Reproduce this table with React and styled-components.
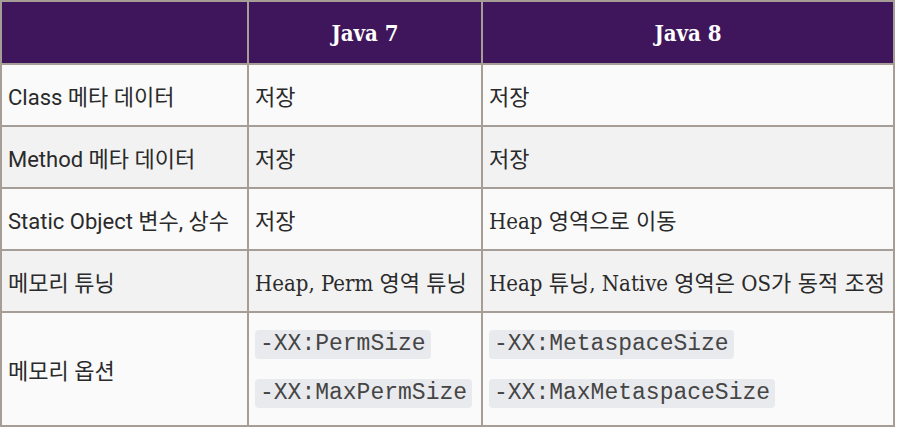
import React from 'react';
import styled, { createGlobalStyle } from 'styled-components';

const GlobalStyle = createGlobalStyle`
    html, body {
        margin: 0;
        padding: 0;
        background: #ffffff;
    }
`;

const Table = styled.table`
    width: 895px;
    border-collapse: collapse;
    border: 2px solid #a69d97;
    table-layout: fixed;
    font-family: Roboto, "Noto Sans CJK KR", sans-serif;
    color: #2a2a2a;
`;

const HeadCell = styled.th`
    height: 61px;
    padding: 0 6px;
    background-color: #3f165b;
    color: #ffffff;
    font-family: "DejaVu Serif Condensed", "DejaVu Serif", "Noto Sans CJK KR", serif;
    font-size: 22px;
    font-weight: bold;
    text-align: center;
    border: 2px solid #a69d97;
`;

const Row = styled.tr`
    background-color: ${(p) => (p.$alt ? '#f2f2f2' : '#fafafa')};
`;

const Cell = styled.td`
    height: ${(p) => (p.$tall ? '112px' : '60px')};
    padding: 0 6px;
    border: 2px solid #a69d97;
    font-size: 22px;
    vertical-align: middle;
    font-family: ${(p) =>
        p.$serif
            ? '"DejaVu Serif Condensed", "DejaVu Serif", "Noto Sans CJK KR", serif'
            : 'Roboto, "Noto Sans CJK KR", sans-serif'};
    white-space: nowrap;
`;

const CodeStack = styled.div`
    display: flex;
    flex-direction: column;
    align-items: flex-start;
    gap: 20px;
`;

const Code = styled.code`
    display: inline-block;
    padding: 3px 5px;
    background-color: #e9eaed;
    border-radius: 4px;
    font-family: "Liberation Mono", "Courier New", monospace;
    font-size: 23px;
    line-height: 23px;
    color: #454545;
`;

const rows = [
    ['Class 메타 데이터', '저장', '저장'],
    ['Method 메타 데이터', '저장', '저장'],
    ['Static Object 변수, 상수', '저장', 'Heap 영역으로 이동'],
    ['메모리 튜닝', 'Heap, Perm 영역 튜닝', 'Heap 튜닝, Native 영역은 OS가 동적 조정'],
];

export default function App() {
    return (
        <>
            <GlobalStyle />
            <Table>
                <colgroup>
                    <col style={{ width: 247 }} />
                    <col style={{ width: 234 }} />
                    <col />
                </colgroup>
                <thead>
                    <tr>
                        <HeadCell />
                        <HeadCell>Java 7</HeadCell>
                        <HeadCell>Java 8</HeadCell>
                    </tr>
                </thead>
                <tbody>
                    {rows.map((r, i) => (
                        <Row key={r[0]} $alt={i % 2 === 1}>
                            <Cell>{r[0]}</Cell>
                            <Cell $serif>{r[1]}</Cell>
                            <Cell $serif>{r[2]}</Cell>
                        </Row>
                    ))}
                    <Row>
                        <Cell $tall>메모리 옵션</Cell>
                        <Cell $tall>
                            <CodeStack>
                                <Code>-XX:PermSize</Code>
                                <Code>-XX:MaxPermSize</Code>
                            </CodeStack>
                        </Cell>
                        <Cell $tall>
                            <CodeStack>
                                <Code>-XX:MetaspaceSize</Code>
                                <Code>-XX:MaxMetaspaceSize</Code>
                            </CodeStack>
                        </Cell>
                    </Row>
                </tbody>
            </Table>
        </>
    );
}
